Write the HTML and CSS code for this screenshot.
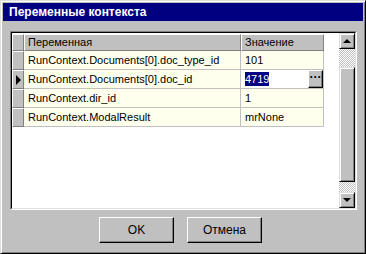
FILE: index.html
```html
<!DOCTYPE html>
<html lang="ru">
<head>
    <meta charset="UTF-8">
    <title>Переменные контекста</title>
    <link rel="stylesheet" href="styles.css">
</head>
<body>
    <div class="window">
        <div class="titlebar">Переменные контекста</div>
        <div class="client">
            <div class="grid-frame">
                <div class="grid">
                    <div class="cells">
                        <div class="row head">
                            <div class="ind"></div>
                            <div class="cell name">Переменная</div>
                            <div class="cell value">Значение</div>
                        </div>
                        <div class="row">
                            <div class="ind"></div>
                            <div class="cell name">RunContext.Documents[0].doc_type_id</div>
                            <div class="cell value">101</div>
                        </div>
                        <div class="row">
                            <div class="ind"><span class="arrow"></span></div>
                            <div class="cell name">RunContext.Documents[0].doc_id</div>
                            <div class="cell value editing"><span class="sel">4719</span><span class="dots">···</span></div>
                        </div>
                        <div class="row">
                            <div class="ind"></div>
                            <div class="cell name">RunContext.dir_id</div>
                            <div class="cell value">1</div>
                        </div>
                        <div class="row">
                            <div class="ind"></div>
                            <div class="cell name">RunContext.ModalResult</div>
                            <div class="cell value">mrNone</div>
                        </div>
                    </div>
                    <div class="scrollbar">
                        <div class="sbtn"><span class="up"></span></div>
                        <div class="track top"></div>
                        <div class="thumb"></div>
                        <div class="track bottom"></div>
                        <div class="sbtn"><span class="down"></span></div>
                    </div>
                </div>
            </div>
            <div class="buttons">
                <button class="btn">OK</button>
                <button class="btn">Отмена</button>
            </div>
        </div>
    </div>
</body>
</html>
```

FILE: styles.css
```css
:root {
    --face: #c0c0c0;
    --shadow: #808080;
    --dark: #000;
    --light: #dfdfdf;
    --cell-bg: #ffffee;
    --grid-line: #c0c0c0;
}

body {
    margin: 0;
    font-family: "Liberation Sans", Arial, sans-serif;
    font-size: 11px;
    background: var(--face);
}

.window {
    width: 366px;
    height: 254px;
    box-sizing: border-box;
    background: var(--face);
    border: 1px solid;
    border-color: var(--light) var(--dark) var(--dark) var(--light);
    box-shadow: inset 1px 1px #fff, inset -1px -1px var(--shadow);
    padding: 2px;
    display: flex;
    flex-direction: column;
}

.titlebar {
    height: 18px;
    background: #000080;
    color: #fff;
    font-weight: bold;
    font-size: 12px;
    line-height: 18px;
    padding-left: 6px;
}

.client {
    flex: 1;
    display: flex;
    flex-direction: column;
    padding: 10px 6px 0 7px;
}

.grid-frame {
    height: 177px;
    border: 1px solid;
    border-color: var(--shadow) #fff #fff var(--shadow);
}

.grid {
    height: 100%;
    box-sizing: border-box;
    border: 1px solid;
    border-color: var(--dark) var(--light) var(--light) var(--dark);
    background: #fff;
    display: flex;
}

.cells {
    flex: 1;
    padding-top: 1px;
}

.row {
    display: flex;
    height: 19px;
}

.row.head {
    height: 17px;
}

.ind {
    width: 12px;
    box-sizing: border-box;
    background: var(--face);
    border: 1px solid;
    border-color: #fff var(--shadow) var(--shadow) #fff;
    display: flex;
    align-items: center;
    justify-content: center;
}

.arrow {
    width: 0;
    height: 0;
    border-top: 5px solid transparent;
    border-bottom: 5px solid transparent;
    border-left: 5px solid #000;
}

.cell {
    box-sizing: border-box;
    background: var(--cell-bg);
    border-right: 1px solid var(--grid-line);
    border-bottom: 1px solid var(--grid-line);
    padding-left: 4px;
    line-height: 18px;
    white-space: nowrap;
    overflow: hidden;
    color: #000;
}

.name {
    width: 217px;
}

.value {
    width: 83px;
}

.head .cell {
    background: var(--face);
    border: 1px solid;
    border-color: #fff var(--shadow) var(--shadow) #fff;
    padding-left: 3px;
    line-height: 15px;
}

.editing {
    background: #fff;
    display: flex;
    justify-content: space-between;
    align-items: flex-start;
}

.sel {
    background: #000080;
    color: #fff;
    height: 14px;
    line-height: 14px;
    margin-top: 2px;
}

.dots {
    width: 15px;
    height: 18px;
    box-sizing: border-box;
    background: var(--face);
    border: 1px solid;
    border-color: #fff var(--dark) var(--dark) #fff;
    box-shadow: inset -1px -1px var(--shadow);
    font-weight: bold;
    font-size: 12px;
    line-height: 13px;
    text-align: center;
}

.scrollbar {
    width: 16px;
    display: flex;
    flex-direction: column;
}

.sbtn,
.thumb {
    box-sizing: border-box;
    background: var(--face);
    border: 1px solid;
    border-color: var(--light) var(--dark) var(--dark) var(--light);
    box-shadow: inset 1px 1px #fff, inset -1px -1px var(--shadow);
}

.sbtn {
    height: 16px;
    display: flex;
    align-items: center;
    justify-content: center;
}

.up,
.down {
    width: 0;
    height: 0;
    border-left: 4px solid transparent;
    border-right: 4px solid transparent;
}

.up {
    border-bottom: 4px solid #000;
}

.down {
    border-top: 4px solid #000;
}

.track {
    background: repeating-conic-gradient(var(--face) 0 25%, #fff 0 50%) 0 0 / 2px 2px;
}

.track.top {
    height: 18px;
}

.thumb {
    flex: 1;
}

.track.bottom {
    height: 10px;
}

.buttons {
    display: flex;
    gap: 13px;
    margin: 7px 0 0 89px;
}

.btn {
    width: 75px;
    height: 26px;
    font-family: "Liberation Sans", Arial, sans-serif;
    font-size: 12px;
    color: #000;
    background: var(--face);
    border: 1px solid;
    border-color: #fff var(--dark) var(--dark) #fff;
    box-shadow: inset -1px -1px var(--shadow);
    padding: 0;
}
```
